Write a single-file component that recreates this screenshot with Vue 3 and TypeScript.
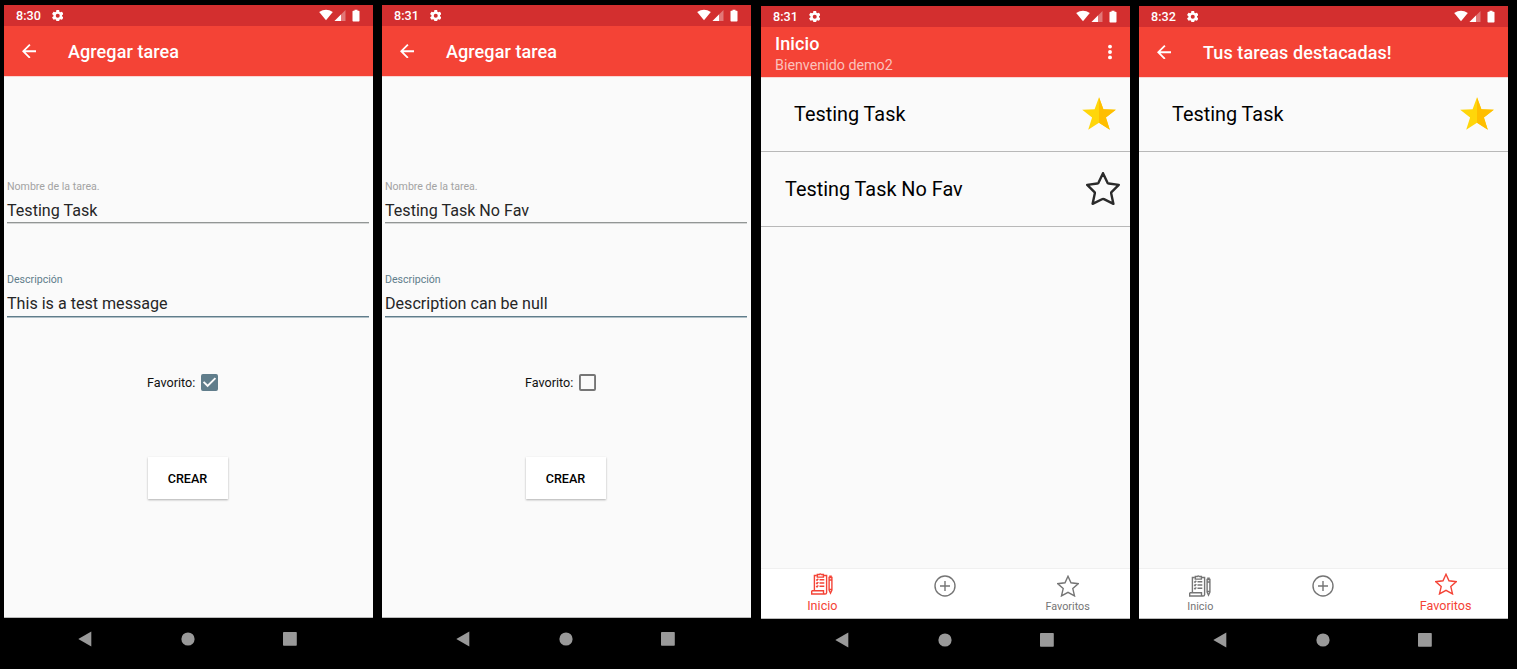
<script setup lang="ts">
interface Task {
  name: string
  favorite: boolean
}

interface Screen {
  id: number
  time: string
  title: string
  subtitle?: string
  kind: 'form' | 'list'
  name?: string
  description?: string
  favorite?: boolean
  tasks?: Task[]
  activeTab?: 'home' | 'favorites'
}

const screens: Screen[] = [
  {
    id: 1,
    time: '8:30',
    title: 'Agregar tarea',
    kind: 'form',
    name: 'Testing Task',
    description: 'This is a test message',
    favorite: true,
  },
  {
    id: 2,
    time: '8:31',
    title: 'Agregar tarea',
    kind: 'form',
    name: 'Testing Task No Fav',
    description: 'Description can be null',
    favorite: false,
  },
  {
    id: 3,
    time: '8:31',
    title: 'Inicio',
    subtitle: 'Bienvenido demo2',
    kind: 'list',
    activeTab: 'home',
    tasks: [
      { name: 'Testing Task', favorite: true },
      { name: 'Testing Task No Fav', favorite: false },
    ],
  },
  {
    id: 4,
    time: '8:32',
    title: 'Tus tareas destacadas!',
    kind: 'list',
    activeTab: 'favorites',
    tasks: [{ name: 'Testing Task', favorite: true }],
  },
]
</script>

<template>
  <main class="board">
    <section v-for="s in screens" :key="s.id" class="phone" :class="s.kind">
      <div class="status">
        <span class="time">{{ s.time }}</span>
        <svg class="gear" viewBox="2 2 20 20">
          <path
            d="M19.43 12.98c.04-.32.07-.64.07-.98s-.03-.66-.07-.98l2.11-1.65c.19-.15.24-.42.12-.64l-2-3.46c-.12-.22-.39-.3-.61-.22l-2.49 1c-.52-.4-1.08-.73-1.69-.98l-.38-2.65C14.46 2.18 14.25 2 14 2h-4c-.25 0-.46.18-.49.42l-.38 2.65c-.61.25-1.17.59-1.69.98l-2.49-1c-.23-.09-.49 0-.61.22l-2 3.46c-.13.22-.07.49.12.64l2.11 1.65c-.04.32-.07.65-.07.98s.03.66.07.98l-2.11 1.65c-.19.15-.24.42-.12.64l2 3.46c.12.22.39.3.61.22l2.49-1c.52.4 1.08.73 1.69.98l.38 2.65c.03.24.24.42.49.42h4c.25 0 .46-.18.49-.42l.38-2.65c.61-.25 1.17-.59 1.69-.98l2.49 1c.23.09.49 0 .61-.22l2-3.46c.12-.22.07-.49-.12-.64zM12 15.5A3.5 3.5 0 1 1 12 8.500a3.500 3.500 0 0 1 0 7z"
          />
        </svg>
        <svg class="signals" viewBox="0 0 42 13">
          <path d="M.2 3Q7-1.500 13.800 3L7 11.200z" />
          <path d="M26.500 1v11H15.500z" opacity=".35" />
          <path d="M22 5.500V12H15.500z" />
          <path d="M35.500 .8h3v1h1.400q.6 0 .6.600v9.400q0 .7-.7.700h-5.600q-.7 0-.7-.7v-9.400q0-.6.6-.6h1.400z" />
        </svg>
      </div>

      <header class="appbar">
        <template v-if="s.subtitle">
          <div class="titles">
            <h1>{{ s.title }}</h1>
            <p>{{ s.subtitle }}</p>
          </div>
          <svg class="more" viewBox="0 0 4 16">
            <circle cx="2" cy="2.600" r="1.950" />
            <circle cx="2" cy="8" r="1.950" />
            <circle cx="2" cy="13.400" r="1.950" />
          </svg>
        </template>
        <template v-else>
          <svg class="back" viewBox="4 4 16 16">
            <path d="M20 11H7.830l5.590-5.590L12 4l-8 8 8 8 1.410-1.410L7.830 13H20z" />
          </svg>
          <h1>{{ s.title }}</h1>
        </template>
      </header>

      <div v-if="s.kind === 'form'" class="body">
        <div class="field">
          <label>Nombre de la tarea.</label>
          <div class="value">{{ s.name }}</div>
        </div>
        <div class="field focused">
          <label>Descripción</label>
          <div class="value">{{ s.description }}</div>
        </div>
        <div class="check-row">
          <span>Favorito:</span>
          <svg viewBox="3 3 18 18" :class="{ checked: s.favorite }">
            <path
              v-if="s.favorite"
              d="M19 3H5a2 2 0 0 0-2 2v14a2 2 0 0 0 2 2h14a2 2 0 0 0 2-2V5a2 2 0 0 0-2-2zm-9 14l-5-5 1.410-1.410L10 14.170l7.590-7.590L19 8z"
            />
            <path
              v-else
              d="M19 5v14H5V5h14m0-2H5a2 2 0 0 0-2 2v14a2 2 0 0 0 2 2h14a2 2 0 0 0 2-2V5a2 2 0 0 0-2-2z"
            />
          </svg>
        </div>
        <button class="create" type="button">CREAR</button>
      </div>

      <div v-else class="body">
        <div v-for="t in s.tasks" :key="t.name" class="task" :class="{ plain: !t.favorite }">
          <span>{{ t.name }}</span>
          <svg v-if="t.favorite" viewBox="0 0 34 34">
            <path
              fill="#ffd60a"
              d="M17 .3l4.400 12 12.400.4-9.900 7.900 3.900 12.200L17 25.800 6.200 32.800l3.900-12.200L.2 12.700l12.400-.4z"
            />
            <path fill="#ffbe00" d="M17 .3l4.400 12 12.400.4-9.900 7.900 3.900 12.200L17 25.800z" />
          </svg>
          <svg v-else viewBox="0 0 34 34">
            <path
              class="hollow"
              d="M17 1.200L21.400 10.600Q21.800 11.400 22.700 11.500L32.800 12.900 25.500 20.100Q25 20.700 25.200 21.500L27.400 31.800 18 27.200Q17 26.700 16 27.200L6.600 31.800 8.800 21.500Q9 20.700 8.500 20.100L1.200 12.900 11.300 11.500Q12.200 11.400 12.600 10.600z"
            />
          </svg>
        </div>
      </div>

      <nav v-if="s.kind === 'list'" class="tabs">
        <div class="tab" :class="{ active: s.activeTab === 'home' }">
          <svg viewBox="0 0 22 22">
            <path
              d="M5.500 2.500H3.400v15.200M13 2.500h2.600V20M6.300 1.500h2q.9-1.300 1.900 0h2.200v2.600H6.300zM.7 17.700h11.800v2q0 1.300 1.500 1.300 1.600 0 1.600-1.600M.7 17.700V21H14M8.500 6.700h4.800M8.500 10h4.800M8.500 13.300h4.800M5.200 6.500l.8.800 1.300-1.500M5.200 9.800l.8.800 1.300-1.500M5.200 13.100l.8.800 1.300-1.500M18.100 4.500h2.800v12.700l-1.400 3-1.400-3zM18.100 7h2.800M18.100 16.500h2.800M18.900 4.300V3.200h1.200v1.100"
            />
          </svg>
          <span>Inicio</span>
        </div>
        <div class="tab">
          <svg viewBox="0 0 22 22">
            <circle cx="11" cy="11" r="10" />
            <path d="M11 6v10M6 11h10" />
          </svg>
        </div>
        <div class="tab" :class="{ active: s.activeTab === 'favorites' }">
          <svg viewBox="0 0 22 22">
            <path
              d="M11 1.300l3 6.500 7.200.9-5.400 4.900 1.700 7.300L11 17.300l-6.500 3.600 1.700-7.300L.8 8.700 8 7.800z"
            />
          </svg>
          <span>Favoritos</span>
        </div>
      </nav>

      <footer class="system">
        <svg viewBox="0 0 369 44">
          <path d="M74.300 21L87.300 13.500v15z" />
          <circle cx="184" cy="21" r="6.600" />
          <rect x="279" y="14" width="13.800" height="13.800" rx=".8" />
        </svg>
      </footer>
    </section>
  </main>
</template>

<style>
body {
  margin: 0;
  background: #000;
}
</style>

<style scoped>
.board {
  display: grid;
  grid-template-columns: 369px 369px 369px 369px;
  column-gap: 9px;
  box-sizing: border-box;
  width: 1517px;
  height: 669px;
  padding: 5px 0 0 4px;
  overflow: hidden;
  background: #000;
  font-family: Roboto, sans-serif;
}
.phone {
  display: flex;
  flex-direction: column;
  width: 369px;
  height: 657px;
}
.phone.list {
  margin: 1px 0 0 1px;
}
.status {
  display: flex;
  align-items: center;
  box-sizing: border-box;
  height: 21px;
  padding: 0 12px;
  background: #d32f2f;
  color: #fff;
}
svg {
  display: block;
  flex: none;
}
.time {
  width: 35.500px;
  font-size: 12.600px;
  font-weight: 500;
  line-height: 21px;
}
.gear {
  width: 11.500px;
  height: 11.500px;
  fill: #fff;
}
.signals {
  width: 42px;
  height: 13px;
  margin-left: auto;
  margin-right: -.200px;
  fill: #fff;
}
.appbar {
  display: flex;
  align-items: center;
  box-sizing: border-box;
  height: 50px;
  flex: none;
  padding: 0 18px 0 17.500px;
  background: #f44336;
  color: #fff;
  box-shadow: 0 1px 0 #f9d6d4;
  z-index: 1;
}
.back {
  width: 14.500px;
  height: 14.500px;
  margin-right: 32px;
  fill: #fff;
}
h1 {
  margin: 0;
  font-size: 18px;
  font-weight: 500;
  line-height: 24px;
  letter-spacing: .09px;
  padding-top: 2px;
}
.titles {
  margin-left: -3.500px;
  padding-top: 4px;
}
.titles h1 {
  line-height: 20px;
  padding: 0;
}
.titles p {
  margin: 2px 0 0;
  font-size: 14.300px;
  line-height: 18px;
  color: #fbc1bc;
}
.more {
  width: 4px;
  height: 16px;
  margin-left: auto;
  fill: #fff;
}
.body {
  flex: 1;
  display: flex;
  flex-direction: column;
  background: #fafafa;
}
.form .body {
  box-sizing: border-box;
  align-items: center;
  padding: 104px 1px 0 0;
  border-bottom: 1px solid #bbb;
}
.field {
  width: 362px;
  height: 93px;
}
.field label {
  display: block;
  font-size: 10.600px;
  line-height: 14px;
  color: #a3a3a3;
}
.field.focused label {
  color: #607d8b;
}
.value {
  height: 22px;
  padding: 6px 0 0;
  border-bottom: 1px solid #929695;
  box-shadow: 0 1px 0 #d5d6d6;
  font-size: 16.100px;
  line-height: 22px;
  color: #262626;
}
.focused .value {
  height: 23px;
  border-color: #607d8b;
  box-shadow: 0 1px 0 #b0bfc6;
}
.check-row {
  display: flex;
  align-items: center;
  width: 82px;
  height: 20px;
  margin-top: 6px;
  font-size: 12.600px;
  color: #111;
}
.check-row svg {
  width: 17px;
  height: 17px;
  margin: 1px 0 0 5.500px;
  fill: #757575;
}
.check-row .checked {
  fill: #607d8b;
}
.create {
  width: 80px;
  height: 42px;
  margin-top: 65px;
  margin-right: 1px;
  padding: 0;
  border: 0;
  background: #fff;
  box-shadow: 0 1px 2px rgba(0, 0, 0, .3);
  font-family: inherit;
  font-size: 12.600px;
  font-weight: 500;
  color: #000;
}
.task {
  display: flex;
  align-items: center;
  justify-content: space-between;
  box-sizing: border-box;
  height: 75px;
  padding: 0 14px 0 33px;
  border-bottom: 1px solid #b8b8b8;
  font-size: 19.850px;
  color: #000;
}
.task.plain {
  padding: 0 10px 0 24px;
}
.task svg {
  width: 34px;
  height: 34px;
}
.hollow {
  fill: none;
  stroke: #2a2a2a;
  stroke-width: 2.400;
  stroke-linejoin: round;
}
.tabs {
  display: grid;
  grid-template-columns: 1fr 1fr 1fr;
  box-sizing: border-box;
  height: 51px;
  padding-right: 1px;
  border-top: 1px solid #f0f0f0;
  border-bottom: 1px solid #bbb;
  background: #fff;
}
.tab {
  display: flex;
  flex-direction: column;
  align-items: center;
  padding-top: 6px;
  font-size: 10.800px;
  line-height: 14px;
  color: #757575;
}
.tab svg {
  width: 22px;
  height: 22px;
  fill: none;
  stroke: currentColor;
  stroke-width: 1.400;
}
.tab span {
  margin-top: 3px;
}
.tab.active {
  padding-top: 4px;
  font-size: 12.600px;
  color: #f44336;
}
.tab.active span {
  margin-top: 4px;
}
.system {
  height: 44px;
  flex: none;
}
.system svg {
  width: 369px;
  height: 44px;
  fill: #999;
}
</style>
